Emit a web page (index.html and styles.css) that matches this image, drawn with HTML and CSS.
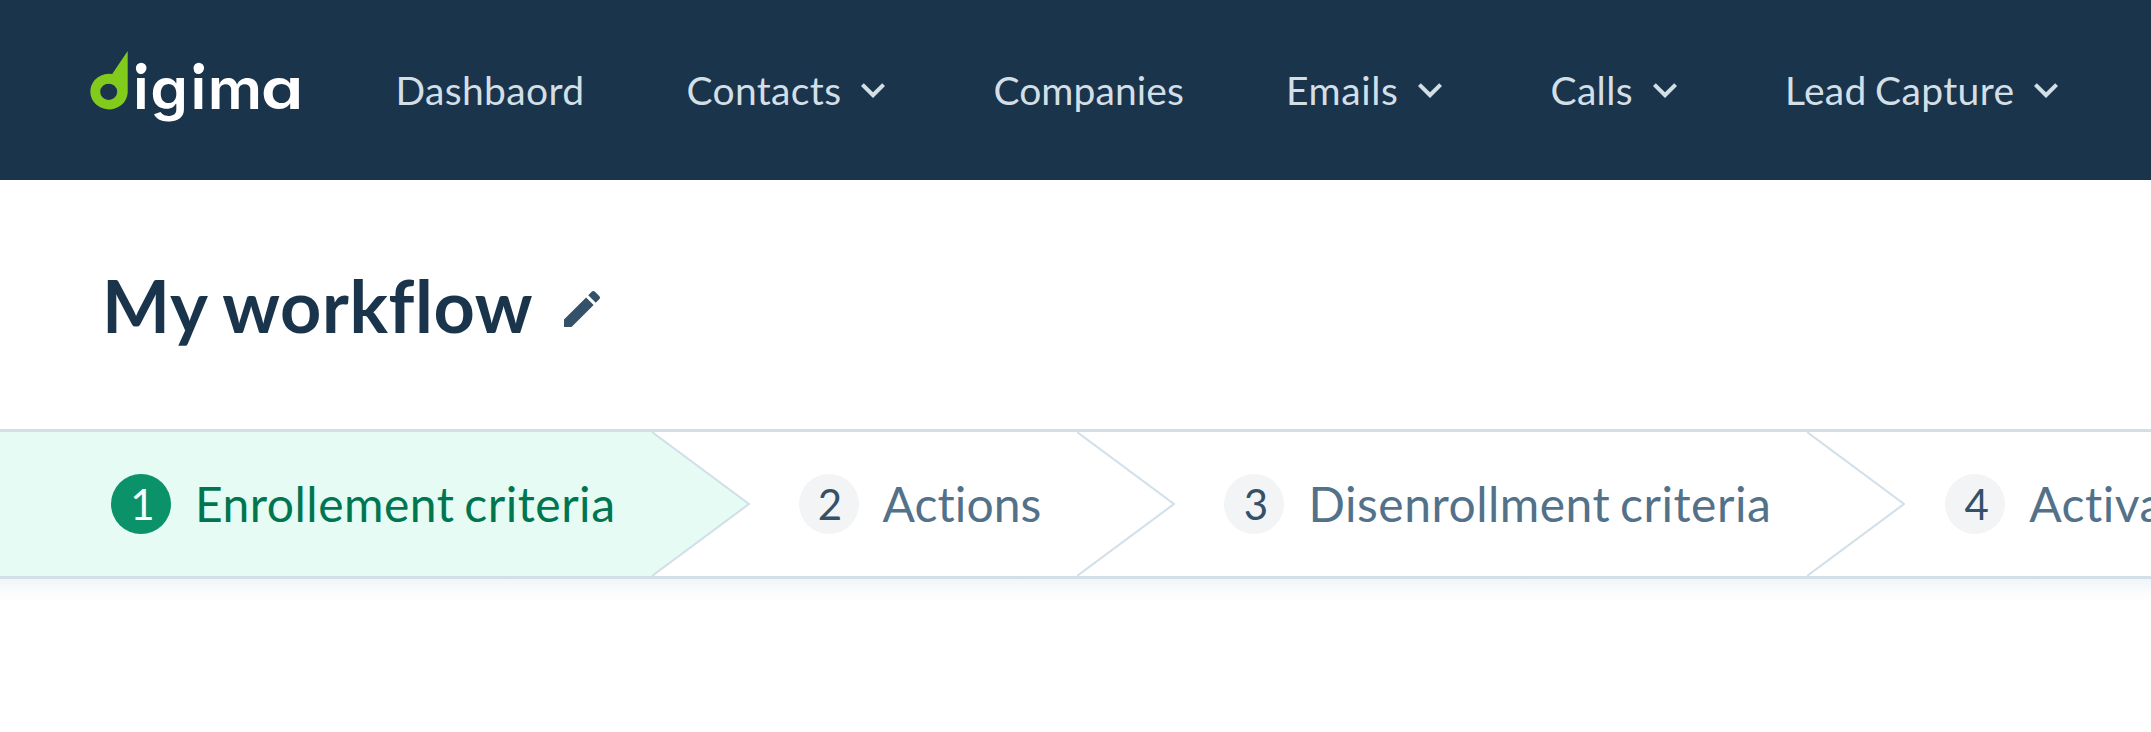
FILE: index.html
```
<!DOCTYPE html>
<html lang="en">
<head>
<meta charset="utf-8">
<title>My workflow</title>
<link rel="stylesheet" href="styles.css">
</head>
<body>
<svg class="sprite" width="0" height="0">
  <symbol id="chevron" viewBox="0 0 24 24"><path d="M7.41 8.59 12 13.17l4.59-4.58L18 10l-6 6-6-6z"/></symbol>
  <symbol id="arrow" viewBox="0 0 98 144"><path d="M0 0 97 72 0 144"/></symbol>
</svg>
<header class="topbar">
  <svg class="logo" width="220" height="84" viewBox="0 0 220 84">
    <path class="logo-mark" fill-rule="evenodd" d="M37.7 0V41.500a18.700 17.800 0 1 1-15.500-18.400zM18.700 32.700a8.500 8.100 0 1 0 0 16.200 8.500 8.100 0 0 0 0-16.200z"/>
    <text class="logo-text" transform="scale(1.06 1)" x="40.600 56.800 94.900 111.100" y="58">igim</text>
    <text class="logo-text" transform="scale(1.2 1)" x="142.200" y="58">a</text>
    <circle class="logo-dot" cx="51.200" cy="17" r="5.300"/>
    <circle class="logo-dot" cx="108.800" cy="17" r="5.300"/>
  </svg>
  <nav class="nav">
    <a class="nav-item plain">Dashbaord</a>
    <a class="nav-item">Contacts<svg class="chevron"><use href="#chevron"/></svg></a>
    <a class="nav-item plain tight">Companies</a>
    <a class="nav-item loose">Emails<svg class="chevron"><use href="#chevron"/></svg></a>
    <a class="nav-item">Calls<svg class="chevron"><use href="#chevron"/></svg></a>
    <a class="nav-item">Lead Capture<svg class="chevron"><use href="#chevron"/></svg></a>
  </nav>
</header>
<section class="heading">
  <h1 class="title">My workflow</h1>
  <svg class="edit" viewBox="0 0 24 24"><path d="M3 17.250V21h3.750L17.810 9.940l-3.750-3.750L3 17.250zM20.710 7.040a1 1 0 0 0 0-1.410l-2.340-2.340a1 1 0 0 0-1.410 0l-1.830 1.830 3.750 3.750 1.830-1.830z"/></svg>
</section>
<ol class="steps">
  <li class="step active"><div class="step-body"><span class="num">1</span><span class="label">Enrollement criteria</span></div><svg class="arrow"><use href="#arrow"/></svg></li>
  <li class="step"><div class="step-body"><span class="num">2</span><span class="label tight">Actions</span></div><svg class="arrow"><use href="#arrow"/></svg></li>
  <li class="step"><div class="step-body"><span class="num">3</span><span class="label">Disenrollment criteria</span></div><svg class="arrow"><use href="#arrow"/></svg></li>
  <li class="step last"><div class="step-body"><span class="num">4</span><span class="label">Activate</span></div></li>
</ol>
<div class="steps-shade"></div>
</body>
</html>
```
FILE: styles.css
```
* { box-sizing: border-box; }
body {
  margin: 0;
  background: #fff;
  font-family: Lato, "Liberation Sans", sans-serif;
  font-variant-ligatures: none;
  overflow-x: hidden;
}
.sprite { display: block; height: 0; }
.topbar {
  display: flex;
  align-items: flex-start;
  height: 180px;
  background: #19344b;
}
.logo {
  flex: none;
  margin: 51px 86px 0 89.500px;
  overflow: visible;
}
.logo-mark { fill: #82cb1c; }
.logo-dot { fill: #fff; }
.logo-text {
  fill: #fff;
  font-family: Inter, sans-serif;
  font-size: 57px;
  font-weight: 600;
  font-feature-settings: "cv11";
}
.nav {
  display: flex;
  gap: 96px;
  padding-top: 66px;
}
.nav-item {
  display: flex;
  align-items: center;
  height: 48px;
  color: #d3dfe6;
  font-size: 39px;
  line-height: 48px;
  letter-spacing: 0.350px;
  word-spacing: -2px;
  white-space: nowrap;
}
.nav-item.plain { margin-right: 6px; }
.nav-item.tight { letter-spacing: 0.100px; }
.nav-item.loose { letter-spacing: 0.600px; }
.chevron {
  width: 48px;
  height: 48px;
  margin-left: 8px;
  fill: #d3dfe6;
}
.heading {
  display: flex;
  align-items: center;
  height: 249px;
  padding: 0 0 0 102px;
}
.title {
  margin: 1px 0 0;
  color: #19344b;
  font-size: 72px;
  line-height: 86px;
  font-weight: 700;
  letter-spacing: 0.600px;
  word-spacing: -1px;
}
.edit {
  width: 48px;
  height: 48px;
  margin: 8px 0 0 25px;
  fill: #335169;
}
.steps {
  display: flex;
  height: 150px;
  margin: 0;
  padding: 0;
  list-style: none;
  border-top: 3px solid #d3dfe6;
  border-bottom: 3px solid #d3dfe6;
}
.steps-shade {
  height: 22px;
  background: linear-gradient(#f0f5f8, #f7fafb 40%, #fdfdfd 80%, #fff);
}
.step { display: flex; flex: none; height: 144px; }
.step-body {
  display: flex;
  align-items: center;
  gap: 24px;
  padding: 0 36px 0 49px;
}
.active .step-body { padding-left: 111px; background: #e5fbf4; }
.last .step-body { padding-left: 40px; }
.num {
  flex: none;
  width: 60px;
  height: 60px;
  padding-left: 3px;
  border-radius: 50%;
  background: #f2f4f6;
  color: #335169;
  font-size: 42px;
  line-height: 60px;
  text-align: center;
}
.active .num { background: #0b9268; color: #fff; }
.label {
  color: #537289;
  font-size: 48px;
  line-height: 60px;
  letter-spacing: 0.500px;
  word-spacing: -3px;
  white-space: nowrap;
}
.label.tight { letter-spacing: 0.100px; }
.active .label { color: #007650; }
.arrow {
  width: 98px;
  height: 144px;
  fill: none;
  stroke: #d1dfe9;
  stroke-width: 2px;
}
.active .arrow { fill: #e5fbf4; }
```
